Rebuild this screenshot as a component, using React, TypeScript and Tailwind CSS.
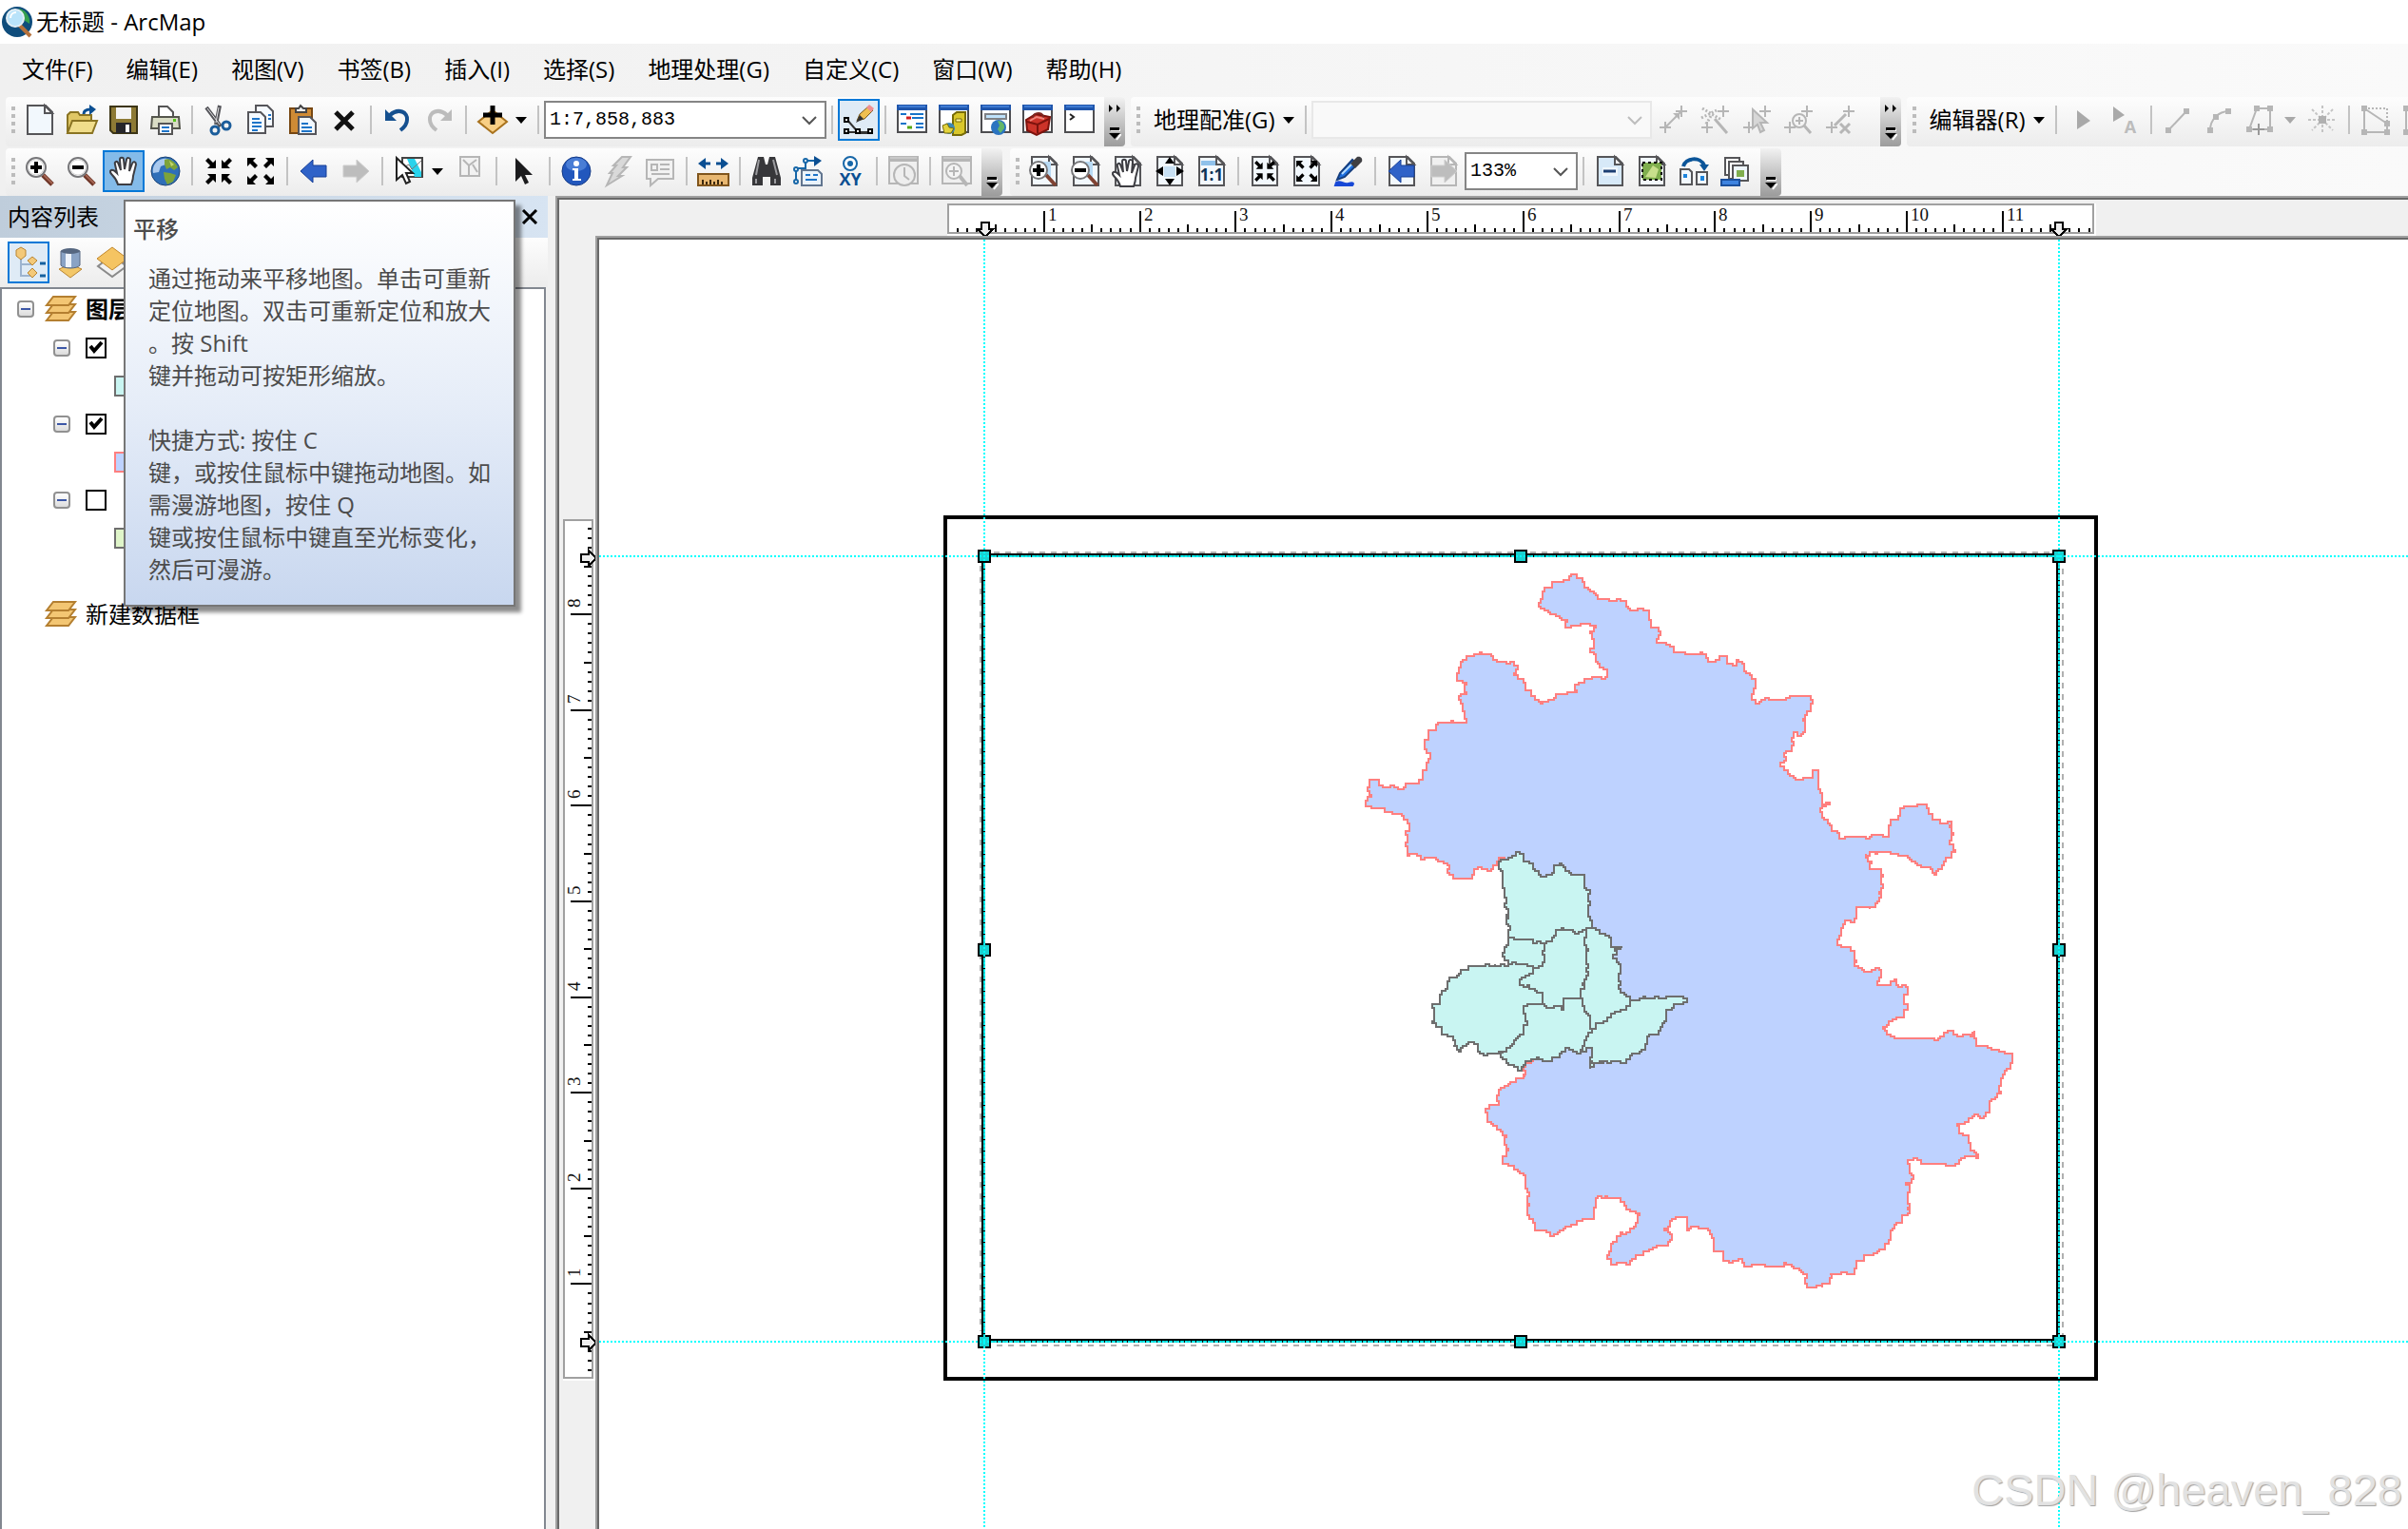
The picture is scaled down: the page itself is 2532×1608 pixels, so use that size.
import React from "react";

type Pt = [number, number];

const UI = "font-['Open_Sans','Noto_Sans_CJK_SC',sans-serif]";

/* ---------- toolbar glyphs, all on a 32 x 32 grid ---------- */

function G({ children }: { children: React.ReactNode }) {
  return (
    <svg viewBox="0 0 32 32" className="size-8 shrink-0 overflow-visible" fill="none" aria-hidden="true">
      {children}
    </svg>
  );
}

const DIM = "#b6b6b6";

function Sheet({ stroke = "#555558", fill = "#f2f8fd" }: { stroke?: string; fill?: string }) {
  return (
    <>
      <path d="M3 1h19l7 7v23H3z" fill={fill} stroke={stroke} strokeWidth="2" />
      <path d="M21 1v8h8z" fill="#fff" stroke={stroke} strokeWidth="2" />
    </>
  );
}

function Win({ dim = false }: { dim?: boolean }) {
  return (
    <>
      <rect x="1" y="1" width="30" height="28" fill={dim ? "#efefef" : "#fff"} stroke={dim ? DIM : "#4d4d50"} strokeWidth="2" />
      <rect x="0" y="0" width="32" height="6" fill={dim ? DIM : "#1f55ab"} />
      <rect x="2" y="1" width="28" height="2" fill={dim ? "#c8c8c8" : "#3f7bd3"} />
    </>
  );
}

function Lens({ minus = false }: { minus?: boolean }) {
  return (
    <>
      <path d="M19 20l10 10" stroke="#6e3527" strokeWidth="5" />
      <path d="M20 20l9 9" stroke="#a56552" strokeWidth="2" />
      <circle cx="12" cy="12" r="10" fill="#fff" stroke="#77777a" strokeWidth="2" />
      <circle cx="12" cy="12" r="8" stroke="#d6d6d6" strokeWidth="1" />
      <path d="M6 12h12" stroke="#000" strokeWidth="4" />
      {!minus && <path d="M12 6v12" stroke="#000" strokeWidth="4" />}
    </>
  );
}

function PageLens({ minus = false }: { minus?: boolean }) {
  return (
    <>
      <Sheet />
      <path d="M15 6h8v16h-8z" fill="#b9dbf5" />
      <path d="M18 20l10 11" stroke="#7f4232" strokeWidth="4" />
      <circle cx="10" cy="15" r="9" fill="#fff" stroke="#77777a" strokeWidth="2" />
      <path d="M4 15h12" stroke="#000" strokeWidth="4" />
      {!minus && <path d="M10 9v12" stroke="#000" strokeWidth="4" />}
    </>
  );
}

const HAND =
  "M10 30c-1-4-3-7-6-10-2-2-3-4-1-5s4 1 6 3L7 9C6 6 9 5 10 7l3 8-1-11c0-3 4-3 4 0l1 10 2-10c0-3 4-2 4 0l-1 12 3-8c1-3 4-2 4 1l-3 12c0 4-1 6-2 9z";

function Arrows({ out = false, s = 1 }: { out?: boolean; s?: number }) {
  const one = out ? "M1 1h9l-3 3 5 5-3 3-5-5-3 3z" : "M12 12H3l3-3-5-5 3-3 5 5 3-3z";
  return (
    <g transform={`translate(16 16) scale(${s}) translate(-16 -16)`} fill="#000">
      {[0, 90, 180, 270].map((a) => (
        <path key={a} d={one} transform={`rotate(${a} 16 16) translate(1 1)`} />
      ))}
    </g>
  );
}

function Globe() {
  return (
    <>
      <circle cx="16" cy="16" r="15" fill="#2f6fb8" stroke="#1c4476" />
      <path d="M7 6c5-4 10-4 12-2l-3 5-5 2-2 6-6 1c-1-5 1-9 4-12z" fill="#a9c9ee" />
      <path d="M15 4c5-3 12 3 14 8l-4 3-4-3-4 2-2-5zM14 17l7 1 6 2-3 7-6 3-3-6z" fill="#7da33a" />
      <path d="M20 5l5 4-3 2z" fill="#c4d66c" />
    </>
  );
}

function Back({ dim = false, flip = false }: { dim?: boolean; flip?: boolean }) {
  return (
    <path
      d="M2 16L15 4v6h14v12H15v6z"
      transform={flip ? "translate(32 0) scale(-1 1)" : undefined}
      fill={dim ? "#bdbdbd" : "#2f62c8"}
      stroke={dim ? "#cdcdcd" : "#173f96"}
      strokeWidth="1"
    />
  );
}

function Plus({ x, y }: { x: number; y: number }) {
  return <path d={`M${x - 6} ${y}h12M${x} ${y - 6}v12`} stroke={DIM} strokeWidth="2" />;
}

const icons: Record<string, React.ReactNode> = {
  new: <Sheet />,
  open: (
    <>
      <path d="M1 30V11l3-3h8l2 3h12v6" fill="#e0c765" stroke="#8a7423" strokeWidth="2" />
      <path d="M1 30l5-13h26l-5 13z" fill="#f0dd8b" stroke="#8a7423" strokeWidth="2" />
      <path d="M18 10c0-4 3-5 7-5" stroke="#0b4f92" strokeWidth="3" />
      <path d="M24 0l7 5-7 6z" fill="#0b4f92" />
    </>
  ),
  save: (
    <>
      <path d="M2 2h28v28H5l-3-3z" fill="#8d7a35" stroke="#3c3515" strokeWidth="2" />
      <rect x="8" y="3" width="16" height="12" fill="#f4f4f4" />
      <rect x="8" y="19" width="16" height="11" fill="#26262a" />
      <rect x="18" y="21" width="4" height="8" fill="#fff" />
    </>
  ),
  print: (
    <>
      <path d="M9 13V2h9l6 6v5" fill="#fff" stroke="#555" strokeWidth="2" />
      <path d="M2 13h28l1 12H1z" fill="#d9dcc5" stroke="#55564c" strokeWidth="2" />
      <rect x="24" y="15" width="3" height="3" fill="#55c41a" />
      <path d="M9 20h14v11H9z" fill="#fff" stroke="#555" strokeWidth="2" />
      <path d="M12 24h8M12 28h8" stroke="#1d74c8" strokeWidth="2" />
    </>
  ),
  cut: (
    <>
      <path d="M3 3l15 20M17 1l-4 20" stroke="#55555a" strokeWidth="4" />
      <path d="M4 4l13 17M16 3l-3 16" stroke="#e2e2e4" strokeWidth="1" />
      <circle cx="12" cy="27" r="4" stroke="#1b5d9b" strokeWidth="3" />
      <circle cx="24" cy="22" r="4" stroke="#1b5d9b" strokeWidth="3" />
    </>
  ),
  copy: (
    <>
      <path d="M11 1h12l6 6v16H11z" fill="#f5faff" stroke="#55555a" strokeWidth="2" />
      <path d="M3 8h13l5 5v17H3z" fill="#f5faff" stroke="#55555a" strokeWidth="2" />
      <path d="M7 15h8M7 19h10M7 23h10M7 27h6M24 11h3M24 15h3" stroke="#1d74c8" strokeWidth="2" />
    </>
  ),
  paste: (
    <>
      <rect x="3" y="4" width="23" height="26" fill="#cf8b35" stroke="#774712" strokeWidth="2" />
      <path d="M9 8V4h3l2-3 3 3h3v4z" fill="#eee" stroke="#444" strokeWidth="2" />
      <path d="M12 13h12l6 6v12H12z" fill="#f3f9ff" stroke="#55555a" strokeWidth="2" />
      <path d="M15 20h7M15 24h11M15 28h11" stroke="#1d74c8" strokeWidth="2" />
    </>
  ),
  del: <path d="M7 8l18 18M25 8L7 26" stroke="#111" strokeWidth="5" />,
  undo: (
    <>
      <path d="M8 11c9-8 19-3 18 5 0 5-3 8-7 11" stroke="#15508f" strokeWidth="4" />
      <path d="M3 5v12h12z" fill="#15508f" />
    </>
  ),
  redo: (
    <>
      <path d="M24 11C15 3 5 8 6 16c0 5 3 8 7 11" stroke="#bcbcbc" strokeWidth="4" />
      <path d="M29 5v12H17z" fill="#bcbcbc" />
    </>
  ),
  add: (
    <>
      <path d="M16 6l15 12-15 12L1 18z" fill="#f8cf85" stroke="#a8721d" strokeWidth="2" />
      <path d="M16 1v20M6 11h20" stroke="#000" strokeWidth="5" />
    </>
  ),
  editor: (
    <>
      <path d="M3 15l13 15h12M4 29h24" stroke="#333" strokeWidth="2" />
      <path d="M0 13h6v6H0zM0 25h6v6H0zM12 25h6v6h-6zM25 25h6v6h-6z" fill="#000" />
      <path d="M2 15h2v2H2zM2 27h2v2H2zM14 27h2v2h-2zM27 27h2v2h-2z" fill="#fff" />
      <path d="M14 17l3-7L26 2l5 4-9 9z" fill="#f0c04f" stroke="#77581b" strokeWidth="1" />
      <path d="M24 3l3-3 5 4-3 4z" fill="#ef8f92" />
      <path d="M13 19l4-8 4 4z" fill="#333" />
    </>
  ),
  toc: (
    <>
      <Win />
      <path d="M4 10h6M4 20h6" stroke="#1673c9" strokeWidth="2" />
      <path d="M14 10h14M16 14h12M20 20h8M20 24h8" stroke="#1673c9" strokeWidth="2" />
      <path d="M10 14h5" stroke="#d01e1e" strokeWidth="3" />
      <path d="M11 24h5" stroke="#56a715" strokeWidth="3" />
    </>
  ),
  catalog: (
    <>
      <Win />
      <path d="M15 11l4-3h9v22l-4 2h-9z" fill="#d9c72b" stroke="#766b08" strokeWidth="2" />
      <path d="M18 15h6v3h-6z" fill="#fff7a0" stroke="#766b08" />
      <circle cx="11" cy="25" r="6" fill="#3c88b8" />
      <path d="M4 22l5-2 2 4 5 1-3 5H6z" fill="#e2d23c" stroke="#766b08" />
    </>
  ),
  search: (
    <>
      <Win />
      <rect x="5" y="10" width="22" height="5" fill="#bfe2fb" stroke="#7f8185" strokeWidth="2" />
      <circle cx="19" cy="24" r="8" fill="#2b74c0" />
      <path d="M18 17c4 0 8 3 7 8l-4 5-3-4 2-4z" fill="#63b66a" />
    </>
  ),
  toolbox: (
    <>
      <Win />
      <path d="M4 16l10-6 15 3-2 13-12 6L5 27z" fill="#cc3329" stroke="#7c130d" strokeWidth="2" />
      <path d="M5 18l11 3 12-6M16 21v9" stroke="#7c130d" strokeWidth="2" />
      <path d="M11 14c0-5 8-7 11-2v3" stroke="#7d2620" strokeWidth="2" />
      <path d="M8 17l7-4 8 2" stroke="#f0857c" strokeWidth="2" />
    </>
  ),
  python: (
    <>
      <Win />
      <path d="M6 10l4 3-4 3" stroke="#222" strokeWidth="2" />
    </>
  ),
  lens: <Lens />,
  lensOut: <Lens minus />,
  hand: <path d={HAND} fill="#fff" stroke="#3d3d42" strokeWidth="2" />,
  globe: <Globe />,
  inward: <Arrows />,
  outward: <Arrows out />,
  back: <Back />,
  fwd: <Back dim flip />,
  select: (
    <>
      <rect x="9" y="2" width="21" height="20" fill="#fff" stroke="#444" strokeWidth="2" />
      <path d="M14 3h8l7 14v5h-7z" fill="#28d3ec" />
      <path d="M10 12l6-3 3 5 10-9" stroke="#777" />
      <path d="M3 2v23l6-5 4 9 4-2-4-9h7z" fill="#fff" stroke="#222" strokeWidth="2" />
    </>
  ),
  clear: (
    <>
      <rect x="6" y="1" width="20" height="20" fill="#f2f2f2" stroke={DIM} strokeWidth="2" />
      <path d="M9 4l6 6 8-6M15 10v10M19 9l5 8" stroke={DIM} strokeWidth="2" />
    </>
  ),
  pointer: <path d="M8 2v25l6-6 4 9 4-2-4-8h8z" fill="#1b1b1d" />,
  identify: (
    <>
      <circle cx="16" cy="16" r="15" fill="#2257bd" stroke="#173c86" />
      <ellipse cx="16" cy="9" rx="11" ry="7" fill="#5a8de0" opacity=".7" />
      <circle cx="16" cy="8" r="3" fill="#fff" />
      <path d="M12 13h6v11h3v2h-9v-2h2v-9h-2z" fill="#fff" />
    </>
  ),
  bolt: <path d="M20 1h9l-8 11h4l-9 9h4L4 31l6-13H7l7-8h-3z" fill="#d9d9d9" stroke={DIM} strokeWidth="2" />,
  html: (
    <>
      <path d="M2 4h28v20H14l-8 7v-7H2z" fill="#f2f2f2" stroke={DIM} strokeWidth="2" />
      <path d="M7 9h6v6H7zM16 9h10M16 14h10M7 19h19" stroke={DIM} strokeWidth="2" />
    </>
  ),
  measure: (
    <>
      <path d="M0 8l8-6v12zM32 8l-8-6v12z" fill="#0b4f92" />
      <path d="M6 8h7M19 8h7" stroke="#0b4f92" strokeWidth="3" />
      <rect x="0" y="19" width="32" height="12" fill="#e8b771" stroke="#80551d" strokeWidth="2" />
      <path d="M5 30v-5M9 30v-3M13 30v-5M17 30v-3M21 30v-5M25 30v-3" stroke="#3c280d" strokeWidth="2" />
    </>
  ),
  find: (
    <>
      <path d="M7 1h6l2 8h2l2-8h6l6 22v8H20v-9h-8v9H1v-8z" fill="#37373a" />
      <path d="M8 4l-3 16M23 4l4 16M5 24v5M25 24v5" stroke="#9b9b9f" strokeWidth="2" />
    </>
  ),
  route: (
    <>
      <path d="M3 25V13h10V5h12" stroke="#1767a8" strokeWidth="2" />
      <path d="M22 0l8 5-8 6z" fill="#0b4f92" />
      <circle cx="3" cy="14" r="2" fill="#fff" stroke="#1767a8" strokeWidth="2" />
      <circle cx="3" cy="27" r="2" fill="#fff" stroke="#1767a8" strokeWidth="2" />
      <circle cx="13" cy="5" r="2" fill="#fff" stroke="#1767a8" strokeWidth="2" />
      <path d="M9 15h17l4 4v12H9z" fill="#eaf3fb" stroke="#61758f" strokeWidth="2" />
      <path d="M13 20h5M21 20h5M13 25h12" stroke="#1d74c8" strokeWidth="2" />
    </>
  ),
  xy: (
    <>
      <circle cx="16" cy="8" r="7" fill="#fff" stroke="#1767a8" strokeWidth="2" />
      <circle cx="16" cy="8" r="3" fill="#1767a8" />
      <text x="16" y="31" textAnchor="middle" fontSize="18" fontWeight="700" fontFamily="Open Sans" fill="#0b4f92">XY</text>
    </>
  ),
  time: (
    <>
      <Win dim />
      <circle cx="17" cy="20" r="11" fill="#eee" stroke={DIM} strokeWidth="2" />
      <path d="M17 12v9l5 4" stroke={DIM} strokeWidth="2" />
    </>
  ),
  viewer: (
    <>
      <Win dim />
      <path d="M19 21l8 10" stroke={DIM} strokeWidth="4" />
      <circle cx="13" cy="16" r="8" fill="#f4f4f4" stroke={DIM} strokeWidth="2" />
      <path d="M8 16h10M13 11v10" stroke={DIM} strokeWidth="2" />
    </>
  ),
  pageIn: <PageLens />,
  pageOut: <PageLens minus />,
  pageHand: (
    <>
      <Sheet />
      <path d={HAND} transform="translate(-2 2)" fill="#fff" stroke="#3d3d42" strokeWidth="2" />
    </>
  ),
  pageFull: (
    <>
      <Sheet />
      <path d="M10 11h12v11H10z" fill="#c7e0f4" />
      <path d="M16 1l5 7H11zM16 31l5-7H11zM1 16l8-5v10zM31 16l-8-5v10z" fill="#000" />
    </>
  ),
  pageOne: (
    <>
      <Sheet />
      <path d="M5 5h15v5H5z" fill="#8fc1ea" />
      <text x="16" y="26" textAnchor="middle" fontSize="17" fontWeight="700" fontFamily="Open Sans" fill="#0e3456">1:1</text>
    </>
  ),
  pageShrink: (
    <>
      <Sheet />
      <Arrows s={0.78} />
    </>
  ),
  pageGrow: (
    <>
      <Sheet />
      <Arrows out s={0.78} />
    </>
  ),
  brush: (
    <>
      <path d="M3 28c5-3 8 3 13 1s6 0 4 2H2z" fill="#1748d6" stroke="#1748d6" strokeWidth="2" />
      <path d="M4 25l3-7L20 4l5 5L12 22z" fill="#1d6fe0" stroke="#153e7e" strokeWidth="2" />
      <path d="M9 19L21 7" stroke="#b5dcff" strokeWidth="2" />
      <path d="M18 8l7-7c4-1 6 2 5 5l-7 7z" fill="#3f3f43" />
    </>
  ),
  pageBack: (
    <>
      <Sheet />
      <Back />
    </>
  ),
  pageFwd: (
    <>
      <Sheet stroke={DIM} fill="#f0f0f0" />
      <Back dim flip />
    </>
  ),
  draft: (
    <>
      <Sheet fill="#d7e9f8" />
      <path d="M8 12h16v9H8z" fill="#fff" opacity=".6" />
      <path d="M9 16h13" stroke="#1d3f73" strokeWidth="3" />
    </>
  ),
  focus: (
    <>
      <Sheet />
      <rect x="6" y="7" width="20" height="18" fill="#7fae4e" stroke="#000" strokeWidth="2" strokeDasharray="3 3" />
      <path d="M9 22l8-12 6 4-3 9z" fill="#c8df8c" />
    </>
  ),
  layout: (
    <>
      <path d="M5 11c2-9 18-11 22-1" stroke="#0b5599" strokeWidth="4" />
      <path d="M22 9h10l-5 7z" fill="#0b5599" />
      <path d="M2 14h9l3 3v13H2zM19 17h11v13H19z" fill="#f2f8fd" stroke="#555558" strokeWidth="2" />
      <path d="M5 19h4v4H5zM23 21h4v5h-4z" fill="#1d84dc" />
    </>
  ),
  ddp: (
    <>
      <path d="M5 2h15v18H5z" fill="#fff" stroke="#555558" strokeWidth="2" />
      <path d="M9 6h15v18H9z" fill="#fff" stroke="#555558" strokeWidth="2" />
      <path d="M13 10h16v16H13z" fill="#eef6fc" stroke="#555558" strokeWidth="2" />
      <path d="M17 15h8v7h-8z" fill="#7fae4e" />
      <rect x="1" y="25" width="19" height="6" fill="#3e83e0" stroke="#1b4f9c" strokeWidth="2" />
    </>
  ),
  link: (
    <>
      <path d="M9 23L24 8" stroke={DIM} strokeWidth="2" />
      <path d="M16 9h7v7z" fill={DIM} />
      <Plus x={25} y={7} />
      <Plus x={8} y={24} />
    </>
  ),
  auto: (
    <>
      <path d="M3 4l20 12M2 14l16-8M12 12l-6 10" stroke={DIM} strokeWidth="3" strokeDasharray="2 2" />
      <path d="M16 15l13 15" stroke={DIM} strokeWidth="3" />
      <Plus x={25} y={7} />
      <Plus x={8} y={24} />
    </>
  ),
  selLink: (
    <>
      <path d="M12 5v20l5-4 3 8 4-2-4-8h7z" fill="#d7d7d7" stroke={DIM} strokeWidth="2" />
      <Plus x={25} y={7} />
      <Plus x={8} y={24} />
    </>
  ),
  zoomLink: (
    <>
      <circle cx="17" cy="17" r="7" stroke={DIM} strokeWidth="2" />
      <path d="M22 22l7 8" stroke={DIM} strokeWidth="3" />
      <Plus x={25} y={7} />
      <Plus x={7} y={24} />
      <path d="M13 17h8M17 13v8" stroke={DIM} strokeWidth="2" />
    </>
  ),
  delLink: (
    <>
      <path d="M16 20l10 10M26 20L16 30M10 22L22 10" stroke={DIM} strokeWidth="3" />
      <Plus x={25} y={7} />
      <Plus x={7} y={24} />
    </>
  ),
  edit: <path d="M10 6v20l14-9z" fill="#a9a9a9" />,
  editNote: (
    <>
      <path d="M4 2v16l12-7z" fill="#a9a9a9" />
      <text x="22" y="30" textAnchor="middle" fontSize="18" fontWeight="700" fontFamily="Open Sans" fill="#bcbcbc">A</text>
    </>
  ),
  line: (
    <>
      <path d="M6 27L25 7" stroke={DIM} strokeWidth="2" />
      <path d="M3 24h6v6H3zM22 4h6v6h-6z" fill={DIM} />
    </>
  ),
  arc: (
    <>
      <path d="M6 27c0-11 8-20 20-20" stroke={DIM} strokeWidth="2" />
      <path d="M3 24h6v6H3zM9 10h6v6H9zM22 4h6v6h-6z" fill={DIM} />
    </>
  ),
  trace: (
    <>
      <path d="M3 26L11 4h14v22z" stroke={DIM} strokeWidth="2" />
      <path d="M8 1h6v6H8zM22 1h6v6h-6zM22 23h6v6h-6zM0 23h6v6H0z" fill={DIM} />
      <path d="M13 20v12M7 26h12" stroke="#999" strokeWidth="2" />
    </>
  ),
  point: (
    <>
      <path d="M16 1v30M1 16h30M5 5l22 22M27 5L5 27" stroke="#c4c4c4" strokeWidth="2" strokeDasharray="3 2" />
      <path d="M12 12h8v8h-8z" fill="#b0b0b0" />
    </>
  ),
  reshape: (
    <>
      <path d="M4 4v25h24v-9L4 4" stroke={DIM} strokeWidth="2" />
      <path d="M4 4h24v16" stroke={DIM} strokeWidth="2" strokeDasharray="2 2" />
      <path d="M1 1h6v6H1zM1 26h6v6H1zM25 26h6v6h-6zM25 17h6v6h-6z" fill={DIM} />
    </>
  ),
  byOrder: (
    <>
      <path d="M8 12v18h12M8 18h12" stroke="#9db4cf" strokeWidth="2" />
      <path d="M8 0l5 3v6l-5 4-5-4V3zM20 10l5 4-5 5-5-5zM20 22l5 5-5 5-5-5z" fill="#f3c979" stroke="#b98532" strokeWidth="1" />
      <path d="M28 17h6M28 30h6" stroke="#16619f" strokeWidth="3" />
    </>
  ),
  bySource: (
    <>
      <path d="M4 23l12-5 12 5-12 9z" fill="#f3c768" stroke="#b98532" strokeWidth="1" />
      <path d="M6 4v15c3 4 17 4 20 0V4z" fill="#8aa3c5" stroke="#566780" strokeWidth="1" />
      <path d="M11 6h6v15h-6z" fill="#eef3fa" />
      <ellipse cx="16" cy="4" rx="10" ry="3" fill="#566780" />
    </>
  ),
  byVis: (
    <>
      <path d="M16 8l15 12-15 11L1 20z" fill="#f2f2f2" stroke="#8a8a8a" strokeWidth="2" />
      <path d="M16 0l16 12-16 12L0 12z" fill="#f5c462" stroke="#c2872a" strokeWidth="1" />
    </>
  ),
};

/* ---------- toolbar pieces ---------- */

function Tool({ name, icon, on = "" }: { name: string; icon: string; on?: "" | "light" | "deep" }) {
  const tone =
    on === "deep" ? "border-[#0078d7] bg-[#84bbe9]" : on === "light" ? "border-[#0078d7] bg-[#dfebf6]" : "border-transparent";
  return (
    <button type="button" aria-label={name} className={`flex size-11 shrink-0 items-center justify-center border-2 ${tone}`}>
      <G>{icons[icon]}</G>
    </button>
  );
}

function Sep() {
  return (
    <div className="flex h-11 w-3 shrink-0 items-center justify-center">
      <div className="h-[30px] w-0.5 bg-[#c3c3c3]" />
    </div>
  );
}

function Caret({ dim = false }: { dim?: boolean }) {
  return (
    <svg viewBox="0 0 12 7" className="h-[7px] w-3 shrink-0" aria-hidden="true">
      <path d="M0 0h12L6 7z" fill={dim ? "#a8a8a8" : "#000"} />
    </svg>
  );
}

function Drop({ name, dim = false }: { name: string; dim?: boolean }) {
  return (
    <button type="button" aria-label={name} className="flex h-11 w-5 shrink-0 items-center justify-start pl-0.5">
      <Caret dim={dim} />
    </button>
  );
}

function Grip() {
  return (
    <div className="ml-1.5 mr-1 flex h-11 shrink-0 flex-col items-center justify-center gap-1">
      {[0, 1, 2, 3].map((i) => (
        <div key={i} className="size-1 bg-[#bcbcbc]" />
      ))}
    </div>
  );
}

function More({ wide = false }: { wide?: boolean }) {
  return (
    <button
      type="button"
      aria-label="工具栏选项"
      className="-mt-0.5 ml-1 flex w-[22px] shrink-0 flex-col items-center justify-between self-stretch rounded-r bg-gradient-to-b from-[#f2f2f2] to-[#9c9c9c] pt-2 pb-1.5"
    >
      <svg viewBox="0 0 14 8" className="h-2 w-3.5" aria-hidden="true">
        {wide && <path d="M1 0l4 4-4 4zM9 0l4 4-4 4z" fill="#000" />}
      </svg>
      <svg viewBox="0 0 14 14" className="size-3.5" aria-hidden="true">
        <path d="M3 3h10M4 8h9l-4 5" stroke="#fff" strokeWidth="2" fill="none" />
        <path d="M2 0h10v3H2zM1 6h12l-6 6z" fill="#000" />
      </svg>
    </button>
  );
}

function Combo({ label, value, className, dim = false }: { label: string; value: string; className: string; dim?: boolean }) {
  return (
    <div className={`relative h-10 shrink-0 ${className}`}>
      <select
        aria-label={label}
        disabled={dim}
        defaultValue={value}
        className={`size-full appearance-none border-2 pl-1 font-['Liberation_Mono',monospace] text-[20px] leading-8 text-black opacity-100 ${
          dim ? "border-[#e8e8e8] bg-[#f9f9f9]" : "border-[#858585] bg-white"
        }`}
      >
        <option>{value}</option>
      </select>
      <svg viewBox="0 0 16 10" className="pointer-events-none absolute right-2.5 top-4 h-2.5 w-4" fill="none" aria-hidden="true">
        <path d="M1 1l7 7 7-7" stroke={dim ? "#bdbdbd" : "#555"} strokeWidth="2" />
      </svg>
    </div>
  );
}

function TextMenu({ children }: { children: string }) {
  return (
    <button type="button" className="flex h-11 shrink-0 items-center gap-2 pl-2.5 pr-1.5 text-[24px] leading-8 whitespace-nowrap">
      {children}
      <Caret />
    </button>
  );
}

function Bar({ children, className = "" }: { children: React.ReactNode; className?: string }) {
  return (
    <div className={`flex shrink-0 items-start rounded bg-gradient-to-b from-[#fdfdfd] to-[#ececec] pt-0.5 ${className}`}>
      {children}
    </div>
  );
}

/* ---------- map geometry ---------- */

const place = (pts: Pt[], ox: number, oy: number, sx: number): Pt[] => pts.map(([x, y]) => [ox + x / sx, oy + y / 3]);
const north = (pts: Pt[]) => place(pts, 1400, 580, 2.178);
const south = (pts: Pt[]) => place(pts, 1400, 860, 2.0103);

/* Turns long straight runs into small stair steps on a 2px grid, as an unsmoothed raster border. */
function ragged(pts: Pt[], close: boolean) {
  let seed = 7;
  const rnd = () => {
    seed = (seed * 16807) % 2147483647;
    return seed / 2147483647 - 0.5;
  };
  const snap = (v: number) => Math.round(v / 2) * 2;
  const out: Pt[] = [];
  const n = close ? pts.length : pts.length - 1;
  for (let i = 0; i < n; i++) {
    const [x1, y1] = pts[i];
    const [x2, y2] = pts[(i + 1) % pts.length];
    const steps = Math.max(1, Math.round(Math.hypot(x2 - x1, y2 - y1) / 4));
    for (let k = 0; k < steps; k++) {
      const t = k / steps;
      const j = k === 0 ? 0 : 3;
      out.push([snap(x1 + (x2 - x1) * t + rnd() * j), snap(y1 + (y2 - y1) * t + rnd() * j)]);
    }
  }
  const last = close ? out[0] : pts[pts.length - 1];
  out.push([snap(last[0]), snap(last[1])]);
  return out.map(([x, y], i) => (i === 0 ? `${x},${y}` : `${x},${out[i - 1][1]} ${x},${y}`)).join(" ");
}

const provinceNorth: Pt[] = [[388,966],[380,990],[365,1005],[345,995],[328,1005],[322,1033],[285,1033],[272,1015],[268,990],[240,965],[212,973],[205,960],[178,958],[170,920],[172,880],[178,870],[176,845],[160,825],[125,823],[118,807],[97,808],[80,790],[78,785],[92,770],[82,745],[86,722],[105,717],[110,740],[165,746],[172,733],[207,722],[210,690],[218,680],[220,655],[228,650],[225,635],[212,615],[212,592],[220,590],[222,563],[240,562],[244,541],[300,538],[311,530],[303,510],[302,490],[290,455],[305,450],[311,412],[288,405],[290,375],[298,348],[315,328],[345,322],[365,330],[380,347],[415,350],[425,370],[420,390],[440,410],[446,440],[465,465],[478,477],[500,465],[525,450],[550,443],[560,435],[565,413],[605,395],[625,403],[630,370],[615,355],[605,325],[592,305],[602,290],[594,250],[606,235],[582,228],[572,236],[540,237],[538,215],[515,200],[495,188],[473,160],[484,140],[486,112],[498,115],[515,95],[530,92],[550,74],[560,85],[575,95],[580,115],[603,130],[608,147],[660,154],[683,186],[722,184],[728,205],[733,238],[755,256],[745,285],[775,298],[785,320],[820,325],[847,318],[862,345],[880,343],[898,328],[905,352],[918,362],[930,342],[942,352],[948,385],[970,405],[967,450],[962,465],[972,477],[985,465],[1030,468],[1040,460],[1078,453],[1102,465],[1098,505],[1084,515],[1082,578],[1058,575],[1052,630],[1040,635],[1040,660],[1030,680],[1045,700],[1063,722],[1095,712],[1102,688],[1116,700],[1116,750],[1124,795],[1143,798],[1122,812],[1122,842],[1138,855],[1145,880],[1160,885],[1162,903],[1190,897],[1225,903],[1248,892],[1278,900],[1282,845],[1298,845],[1302,812],[1312,801],[1362,802],[1368,825],[1393,860],[1418,855],[1422,910],[1416,925],[1428,950],[1422,965],[1408,968],[1402,990],[1385,1017],[1370,995],[1350,990],[1325,965],[1300,955],[1270,948],[1222,955],[1222,968],[1235,985],[1232,1003],[1260,1008],[1260,1040],[1265,1060],[1256,1080],[1256,1105],[1245,1124],[1203,1127],[1202,1160],[1170,1180],[1168,1210],[1160,1240],[1190,1258],[1200,1275],[1198,1305],[1215,1318]];

const provinceSouth: Pt[] = [[1125,487],[1150,473],[1163,490],[1155,525],[1180,527],[1190,508],[1195,527],[1215,535],[1218,560],[1210,580],[1218,600],[1210,630],[1185,640],[1167,668],[1190,695],[1225,693],[1282,697],[1295,680],[1308,672],[1315,685],[1350,688],[1357,670],[1362,718],[1395,730],[1440,747],[1435,790],[1422,810],[1415,835],[1415,870],[1395,895],[1390,930],[1380,950],[1365,935],[1345,962],[1322,965],[1325,998],[1345,1000],[1350,1050],[1367,1072],[1345,1065],[1320,1100],[1290,1092],[1260,1093],[1240,1072],[1220,1090],[1222,1120],[1232,1140],[1213,1160],[1222,1170],[1218,1200],[1223,1250],[1208,1252],[1208,1275],[1185,1300],[1178,1345],[1155,1375],[1135,1380],[1110,1412],[1107,1437],[1070,1440],[1055,1442],[1055,1470],[1025,1482],[1005,1478],[1005,1440],[972,1408],[945,1418],[910,1408],[880,1418],[868,1392],[850,1403],[832,1400],[828,1368],[812,1365],[808,1325],[798,1295],[775,1292],[755,1300],[750,1262],[735,1257],[718,1270],[715,1290],[703,1300],[718,1320],[713,1350],[680,1360],[650,1380],[632,1412],[612,1402],[598,1410],[583,1380],[590,1345],[612,1310],[625,1308],[642,1280],[652,1245],[630,1235],[610,1202],[570,1195],[558,1215],[553,1267],[525,1272],[490,1302],[470,1317],[455,1300],[430,1302],[430,1275],[415,1240],[417,1180],[410,1130],[385,1095],[365,1093],[360,1065],[373,1045],[365,1020],[368,1000],[340,965],[325,925],[332,905],[352,902],[352,855],[375,842],[390,822],[410,818],[408,785],[440,740],[500,500],[480,400],[430,300],[390,150]];

const countyOutline: Pt[] = [[380,120],[390,110],[405,122],[408,135],[425,145],[430,170],[442,188],[455,178],[465,172],[470,148],[488,148],[495,165],[508,178],[528,180],[535,195],[535,220],[545,240],[542,300],[550,350],[575,368],[588,380],[592,405],[615,405],[600,418],[605,430],[595,445],[610,475],[612,550],[632,573],[675,567],[715,565],[740,562],[752,580],[745,590],[730,590],[708,615],[700,660],[693,685],[672,690],[665,730],[640,742],[622,772],[590,776],[570,768],[548,790],[552,725],[540,735],[525,745],[510,730],[497,725],[485,745],[465,765],[450,770],[440,755],[412,765],[408,785],[402,795],[378,782],[363,755],[358,740],[330,750],[315,735],[310,712],[295,708],[285,720],[275,735],[258,718],[258,690],[238,682],[235,660],[212,650],[217,620],[212,590],[228,575],[232,545],[243,540],[245,515],[265,500],[290,470],[325,463],[335,466],[365,465],[372,452],[362,435],[370,400],[372,370],[375,310],[370,280],[365,240],[360,170],[352,150],[358,130]];

const countyLines: Pt[][] = [
  [[372,375],[385,385],[410,383],[425,395],[450,398],[465,380],[475,352],[492,352],[515,365],[540,350],[550,350]],
  [[450,398],[448,465],[432,475],[415,463],[372,455]],
  [[432,475],[425,492],[402,510],[398,525],[420,540],[445,558],[445,590],[415,592],[408,605],[413,655],[400,690],[380,720],[362,745]],
  [[445,590],[455,602],[475,592],[488,605],[492,570],[525,572]],
  [[540,350],[535,400],[542,420],[538,460],[542,500],[535,520],[525,572],[535,610],[545,640],[550,680],[535,710],[525,745]],
  [[550,680],[560,650],[580,640],[590,615],[620,605],[632,573]],
];

const range = (n: number) => Array.from({ length: n }, (_, i) => i + 1);

function TopRuler() {
  return (
    <svg className="block h-[38px] w-full" aria-label="水平标尺">
      <g transform="translate(-626 -210)" shapeRendering="crispEdges">
        <rect x="996" y="214" width="1208" height="34" fill="#fff" />
        <rect x="997" y="215" width="1204" height="30" fill="#fff" stroke="#a0a0a0" strokeWidth="2" />
        {range(119).map((i) => {
          const x = Math.round(996 + i * 10.08);
          return <rect key={i} x={x} y={i % 10 === 0 ? 222 : i % 5 === 0 ? 236 : 240} width="2" height={i % 10 === 0 ? 22 : i % 5 === 0 ? 8 : 4} fill="#000" />;
        })}
        {range(11).map((n) => (
          <text key={n} x={Math.round(1001 + n * 100.8)} y="232" fontSize="19" fontFamily="Liberation Serif, serif" fill="#111">{n}</text>
        ))}
        {[1036, 2165].map((x) => (
          <path key={x} transform={`translate(${x} 232)`} d="M-4 2h8v7h4L0 17-8 9h4z" fill="#eee" stroke="#000" strokeWidth="2" />
        ))}
      </g>
    </svg>
  );
}

function SideRuler() {
  return (
    <svg className="block h-full w-[38px]" aria-label="垂直标尺">
      <g transform="translate(-588 -248)" shapeRendering="crispEdges">
        <rect x="592" y="546" width="34" height="906" fill="#fff" />
        <rect x="593" y="547" width="30" height="902" fill="#fff" stroke="#a0a0a0" strokeWidth="2" />
        {range(89).map((i) => {
          const y = Math.round(1450 - i * 10.06);
          const w = i % 10 === 0 ? 22 : i % 5 === 0 ? 8 : 4;
          return <rect key={i} x={622 - w} y={y} width={w} height="2" fill="#000" />;
        })}
        {range(8).map((n) => (
          <text key={n} transform={`translate(610 ${Math.round(1444 - n * 100.6)}) rotate(-90)`} fontSize="19" fontFamily="Liberation Serif, serif" fill="#111">{n}</text>
        ))}
        {[587, 1412].map((y) => (
          <path key={y} transform={`translate(609 ${y})`} d="M2-4h8v-4L18 0 10 8V4H2z" fill="#eee" stroke="#000" strokeWidth="2" />
        ))}
      </g>
    </svg>
  );
}

function MapCanvas() {
  return (
    <svg className="block size-full" aria-label="地图版面">
      <g transform="translate(-630 -252)" fill="none" strokeWidth="2" shapeRendering="crispEdges">
        <rect x="994" y="544" width="1210" height="906" fill="#fff" stroke="#000" strokeWidth="4" />
        <polygon points={ragged([...north(provinceNorth), ...south(provinceSouth)], true)} fill="#bed2ff" stroke="#ff7f7f" />
        <polygon points={ragged(south(countyOutline), true)} fill="#c9f5f2" stroke="#6e6e6e" />
        {countyLines.map((l, i) => (
          <polyline key={i} points={ragged(south(l), false)} stroke="#6e6e6e" />
        ))}
        <g stroke="#b0b0b0" strokeDasharray="6 6">
          <path d="M1045 581H2160M1031 595V1400M2169 598V1404M1048 1415H2160" />
        </g>
        <g stroke="#1ad1d1">
          <path d="M1035 585H2165M1035 585V1411M2165 585V1411M1035 1411H2165" />
        </g>
        <g stroke="#000">
          <path d="M1035 585H2165M1035 585V1411" strokeDasharray="2 10" />
          <path d="M2165 585V1411M1035 1411H2165" strokeDasharray="2 4" />
          <path d="M1032 583H2165M1033 583V1410M2163 583V1410M1032 1409H2165" />
        </g>
        <g fill="#1ad1d1" stroke="#000">
          {[1035, 1599, 2165].flatMap((x) =>
            [585, 999, 1411].filter((y) => !(x === 1599 && y === 999)).map((y) => <rect key={`${x}-${y}`} x={x - 6} y={y - 6} width="12" height="12" />),
          )}
        </g>
        <g stroke="#00ffff" strokeDasharray="2 2">
          <path d="M630 585H9000M630 1411H9000M1035 252V9000M2165 252V9000" />
        </g>
      </g>
    </svg>
  );
}

/* ---------- table of contents ---------- */

function Toggle({ name }: { name: string }) {
  return (
    <button type="button" aria-label={name} className="flex size-[18px] shrink-0 items-center justify-center rounded-sm border-2 border-[#919191] bg-gradient-to-b from-white to-[#dcdcdc]">
      <span className="h-0.5 w-2.5 bg-[#3c57a6]" />
    </button>
  );
}

function Stack() {
  return (
    <G>
      {[21, 13, 5].map((y) => (
        <path key={y} d={`M8 ${y - 2}h23l-7 9H1z`} fill="#f3c673" stroke="#b47f30" strokeWidth="2" />
      ))}
    </G>
  );
}

function Layer({ name, checked, swatch }: { name: string; checked: boolean; swatch: string }) {
  return (
    <li>
      <div className="flex h-10 items-center gap-4 pl-[54px]">
        <Toggle name={`折叠${name}`} />
        <div className="grid">
          <input
            type="checkbox"
            aria-label={name}
            defaultChecked={checked}
            className="peer col-start-1 row-start-1 size-[22px] appearance-none border-2 border-black bg-white"
          />
          <svg viewBox="0 0 22 22" className="pointer-events-none invisible col-start-1 row-start-1 size-[22px] peer-checked:visible" fill="none" aria-hidden="true">
            <path d="M5 9l4 5 8-9" stroke="#000" strokeWidth="4" />
          </svg>
        </div>
      </div>
      <div className="flex h-10 items-center pl-[118px]">
        <div className={`h-[22px] w-9 border-2 ${swatch}`} />
      </div>
    </li>
  );
}

const tipLines = [
  "通过拖动来平移地图。单击可重新",
  "定位地图。双击可重新定位和放大",
  "。按 Shift",
  "键并拖动可按矩形缩放。",
  " ",
  "快捷方式: 按住 C",
  "键，或按住鼠标中键拖动地图。如",
  "需漫游地图，按住 Q",
  "键或按住鼠标中键直至光标变化，",
  "然后可漫游。",
];

const menus = ["文件(F)", "编辑(E)", "视图(V)", "书签(B)", "插入(I)", "选择(S)", "地理处理(G)", "自定义(C)", "窗口(W)", "帮助(H)"];

export default function App() {
  return (
    <div className={`relative flex h-screen flex-col overflow-hidden bg-[#f0f0f0] text-black ${UI}`}>
      <header className="flex h-[46px] shrink-0 items-center gap-1 bg-white pl-0.5 text-[24px] leading-8">
        <G>
          <circle cx="16" cy="16" r="16" fill="#0f4d7c" />
          <path d="M18 2c8 2 12 9 11 16l-6-4z" fill="#35a04f" />
          <path d="M18 19l12 12" stroke="#b5713c" strokeWidth="4" />
          <circle cx="14" cy="12" r="9" fill="#b9e3fa" stroke="#e3eef5" strokeWidth="2" />
          <path d="M9 12c0-4 3-6 6-6" stroke="#fff" strokeWidth="2" />
        </G>
        <h1>无标题 - ArcMap</h1>
      </header>

      <div className="shrink-0 bg-gradient-to-r from-[#f0f0f0] to-[#fafafa]">
        <nav className="flex h-14 items-center gap-[3px] pb-0.5 pl-[7px]">
          {menus.map((m) => (
            <button key={m} type="button" className="shrink-0 px-4 text-[24px] leading-8 whitespace-nowrap">
              {m}
            </button>
          ))}
        </nav>

        <div className="flex h-[52px] gap-1.5 overflow-hidden pl-1.5">
          <Bar>
            <Grip />
            <Tool name="新建" icon="new" />
            <Tool name="打开" icon="open" />
            <Tool name="保存" icon="save" />
            <Tool name="打印" icon="print" />
            <Sep />
            <Tool name="剪切" icon="cut" />
            <Tool name="复制" icon="copy" />
            <Tool name="粘贴" icon="paste" />
            <Tool name="删除" icon="del" />
            <Sep />
            <Tool name="撤销" icon="undo" />
            <Tool name="恢复" icon="redo" />
            <Sep />
            <Tool name="添加数据" icon="add" />
            <Drop name="添加数据选项" />
            <Sep />
            <Combo label="地图比例" value="1:7,858,883" className="mt-0.5 w-[297px]" />
            <Sep />
            <Tool name="编辑器工具条" icon="editor" on="light" />
            <Sep />
            <Tool name="内容列表窗口" icon="toc" />
            <Tool name="目录窗口" icon="catalog" />
            <Tool name="搜索窗口" icon="search" />
            <Tool name="工具箱窗口" icon="toolbox" />
            <Tool name="Python 窗口" icon="python" />
            <More wide />
          </Bar>
          <Bar>
            <Grip />
            <TextMenu>地理配准(G)</TextMenu>
            <Sep />
            <Combo label="配准图层" value="" className="mt-0.5 w-[358px]" dim />
            <Tool name="添加控制点" icon="link" />
            <Tool name="自动配准" icon="auto" />
            <Tool name="选择连接" icon="selLink" />
            <Tool name="缩放至连接" icon="zoomLink" />
            <Tool name="删除连接" icon="delLink" />
            <div className="w-4 shrink-0" />
            <More wide />
          </Bar>
          <Bar className="w-[560px]">
            <Grip />
            <TextMenu>编辑器(R)</TextMenu>
            <Sep />
            <Tool name="编辑工具" icon="edit" />
            <Tool name="编辑注记工具" icon="editNote" />
            <Sep />
            <Tool name="直线段" icon="line" />
            <Tool name="端点弧段" icon="arc" />
            <Tool name="追踪" icon="trace" />
            <Drop name="追踪选项" dim />
            <Tool name="点" icon="point" />
            <Sep />
            <Tool name="编辑折点" icon="reshape" />
            <Tool name="整形要素" icon="reshape" />
          </Bar>
        </div>

        <div className="mt-0.5 flex h-[50px] gap-2 pl-1.5">
          <Bar>
            <Grip />
            <Tool name="放大" icon="lens" />
            <Tool name="缩小" icon="lensOut" />
            <Tool name="平移" icon="hand" on="deep" />
            <Tool name="全图" icon="globe" />
            <Sep />
            <Tool name="固定比例放大" icon="inward" />
            <Tool name="固定比例缩小" icon="outward" />
            <Sep />
            <Tool name="返回上一视图" icon="back" />
            <Tool name="转到下一视图" icon="fwd" />
            <Sep />
            <Tool name="选择要素" icon="select" />
            <Drop name="选择方式" />
            <Tool name="清除所选要素" icon="clear" />
            <Sep />
            <Tool name="选择元素" icon="pointer" />
            <Sep />
            <Tool name="识别" icon="identify" />
            <Tool name="超链接" icon="bolt" />
            <Tool name="HTML 弹出窗口" icon="html" />
            <Sep />
            <Tool name="测量" icon="measure" />
            <Sep />
            <Tool name="查找" icon="find" />
            <Tool name="查找路径" icon="route" />
            <Tool name="转到 XY" icon="xy" />
            <Sep />
            <Tool name="时间滑块" icon="time" />
            <Sep />
            <Tool name="创建查看器窗口" icon="viewer" />
            <More />
          </Bar>
          <Bar>
            <Grip />
            <Tool name="版面放大" icon="pageIn" />
            <Tool name="版面缩小" icon="pageOut" />
            <Tool name="版面平移" icon="pageHand" />
            <Tool name="缩放整个页面" icon="pageFull" />
            <Tool name="缩放至 100%" icon="pageOne" />
            <Sep />
            <Tool name="页面固定放大" icon="pageShrink" />
            <Tool name="页面固定缩小" icon="pageGrow" />
            <Tool name="符号刷" icon="brush" />
            <Sep />
            <Tool name="上一范围" icon="pageBack" />
            <Tool name="下一范围" icon="pageFwd" />
            <Combo label="页面缩放" value="133%" className="mt-0.5 w-[119px]" />
            <Sep />
            <Tool name="切换描绘模式" icon="draft" />
            <Tool name="焦点数据框" icon="focus" />
            <Tool name="更改布局" icon="layout" />
            <Tool name="数据驱动页面" icon="ddp" />
            <More />
          </Bar>
        </div>
      </div>

      <main className="relative flex min-h-0 flex-1">
        <aside className="flex w-[576px] shrink-0 flex-col">
          <div className="flex h-11 shrink-0 items-center justify-between bg-gradient-to-r from-[#bfcddb] to-[#d7e4f2] pr-2.5 pl-2 text-[24px] leading-8">
            <h2>内容列表</h2>
            <button type="button" aria-label="关闭">
              <svg viewBox="0 0 18 16" className="h-4 w-[18px]" aria-hidden="true">
                <path d="M2 1l14 14M16 1L2 15" stroke="#000" strokeWidth="3" />
              </svg>
            </button>
          </div>
          <div className="flex h-[52px] shrink-0 items-center bg-gradient-to-b from-[#fdfdfd] to-[#ececec] pl-2">
            <Tool name="按绘制顺序列出" icon="byOrder" on="light" />
            <Tool name="按源列出" icon="bySource" />
            <Tool name="按可见性列出" icon="byVis" />
          </div>
          <div className="mr-0.5 flex-1 border-2 border-b-0 border-[#828790] bg-white text-[24px] leading-8">
            <div className="flex h-[42px] items-center gap-3 pl-4 font-bold">
              <Toggle name="折叠图层" />
              <Stack />
              <span className="-ml-0.5">图层</span>
            </div>
            <ul>
              <Layer name="图层一" checked swatch="border-[#6e6e6e] bg-[#c9f5f2]" />
              <Layer name="图层二" checked swatch="border-[#ff7f7f] bg-[#bed2ff]" />
              <Layer name="图层三" checked={false} swatch="border-[#6e6e6e] bg-[#dff5c9]" />
            </ul>
            <div className="mt-10 flex h-10 items-center gap-2.5 pl-[46px]">
              <Stack />
              <span>新建数据框</span>
            </div>
          </div>
        </aside>

        <div className="ml-2 min-w-0 flex-1 border-t-2 border-l-2 border-[#a0a0a0]">
          <div className="grid size-full grid-cols-[38px_minmax(0,1fr)] grid-rows-[38px_minmax(0,1fr)] border-t-2 border-l-2 border-[#696969] bg-[#f0f0f0]">
            <div />
            <TopRuler />
            <SideRuler />
            <div className="overflow-hidden border-t-2 border-l-2 border-[#a0a0a0]">
              <div className="size-full border-t-2 border-l-2 border-[#696969] bg-white">
                <MapCanvas />
              </div>
            </div>
          </div>
        </div>

        <div
          role="tooltip"
          className="absolute top-1 left-[130px] w-[412px] border-2 border-[#767676] bg-gradient-to-b from-white via-[#e6edf8] to-[#c8d7ef] pt-3 pb-5 pl-2 text-[24px] leading-[34px] text-[#4c4c4c] shadow-[6px_6px_4px_rgba(0,0,0,0.45)]"
        >
          <p className="mb-[18px] font-medium">平移</p>
          <div className="pl-4 whitespace-pre">
            {tipLines.map((t, i) => (
              <p key={i}>{t}</p>
            ))}
          </div>
        </div>
      </main>

      <p className="pointer-events-none absolute right-1.5 bottom-3.5 font-['Liberation_Sans',sans-serif] text-[47px] leading-[54px] text-[#e2e2e2] [text-shadow:1px_1px_1px_#a0a0a0]">
        CSDN @heaven_828
      </p>
    </div>
  );
}
